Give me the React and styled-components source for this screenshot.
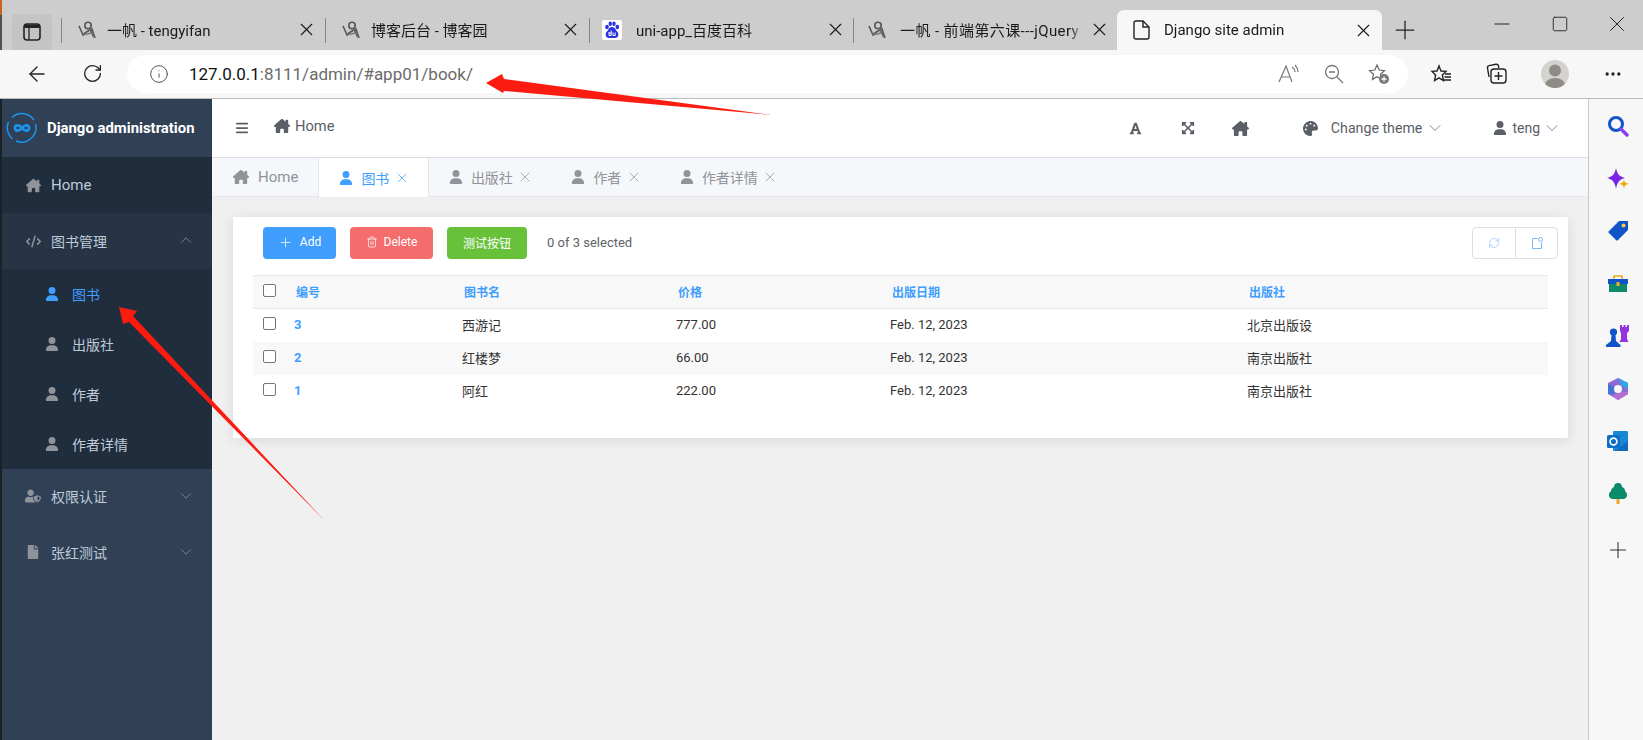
import React from 'react';
import styled, { createGlobalStyle } from 'styled-components';
import { ArrowLeft, RotateCw, Info, X, Plus, Minus, Square, MoreHorizontal, ChevronDown, ChevronUp, Trash2, RefreshCw } from 'lucide-react';
import { FaUserShield, FaFile, FaFont, FaExpandArrowsAlt, FaPalette } from 'react-icons/fa';
import { FaHouseChimney, FaUser, FaCode, FaBars } from 'react-icons/fa6';

const Global = createGlobalStyle`
  html, body { margin: 0; padding: 0; height: 100%; overflow: hidden; }
  body { font-family: Roboto, "Noto Sans CJK SC", sans-serif; font-size: 14px; color: #333; }
  * { box-sizing: border-box; }
`;

const Shell = styled.div`
  position: relative;
  width: 1643px;
  height: 740px;
  display: flex;
  flex-direction: column;
  overflow: hidden;
  background: #f7f7f7;
`;
const Sliver = styled.div`
  position: absolute;
  left: 0;
  top: 0;
  width: 2px;
  height: 50px;
  background: linear-gradient(#c8641e 0 15px, #55504c 15px);
`;

/* browser chrome */
const TabStrip = styled.div`
  height: 50px;
  flex: none;
  display: flex;
  align-items: flex-end;
  padding-left: 12px;
  background: #cdcdcd;
  font-family: Roboto, "Noto Sans CJK SC", sans-serif;
  font-size: 15px;
  color: #1a1a1a;
`;
const PanelBtn = styled.div`
  width: 40px;
  height: 36px;
  margin-right: 9px;
  display: flex;
  align-items: center;
  justify-content: center;
  background: #c4c4c4;
  border-radius: 4px;
`;
const BrowserTab = styled.div`
  width: ${p => (p.$active ? 265 : 264)}px;
  height: ${p => (p.$active ? 40 : 36)}px;
  display: flex;
  align-items: center;
  position: relative;
  padding-left: 16px;
  ${p => p.$active && 'background:#f7f7f7;border-radius:7px 7px 0 0;'}
  ${p => !p.$active && `
    &::before {
      content: '';
      position: absolute;
      left: 0;
      top: 4px;
      height: 25px;
      width: 1px;
      background: #858585;
    }
  `}
`;
const TabIcon = styled.span`
  display: flex;
  margin-left: ${p => p.$shift || 0}px;
  margin-top: ${p => (p.$active ? 0 : -5)}px;
`;
const TabTitle = styled.span`
  margin-left: ${p => p.$gap}px;
  width: 188.5px;
  flex: none;
  white-space: nowrap;
  overflow: hidden;
  letter-spacing: ${p => p.$ls || 0}px;
  margin-top: ${p => (p.$active ? 0 : -5)}px;
  mask-image: linear-gradient(90deg, #000 170px, transparent 184px);
`;
const TabClose = styled(X)`
  flex: none;
  margin-top: ${p => (p.$active ? 0 : -5)}px;
`;
const NewTab = styled.div`
  margin-left: 8px;
  height: 40px;
  display: flex;
  align-items: center;
`;
const WinControls = styled.div`
  margin-left: auto;
  margin-right: -3px;
  align-self: flex-start;
  display: flex;
  height: 50px;
  padding-bottom: 2px;
  align-items: center;
`;
const WinBtn = styled.div`
  width: 57.5px;
  display: flex;
  justify-content: center;
`;
const ToolBar = styled.div`
  height: 49px;
  flex: none;
  display: flex;
  align-items: center;
  padding: 0 20px 1px 25px;
  background: #f7f7f7;
  border-bottom: 1px solid #bdbdbd;
  color: #222;
`;
const NavBtn = styled.div`
  width: 24px;
  display: flex;
  justify-content: center;
  margin-right: ${p => p.$mr || 0}px;
`;
const AddressPill = styled.div`
  width: 1281px;
  height: 38px;
  margin-left: 23px;
  display: flex;
  align-items: center;
  padding-left: 22px;
  border-radius: 19px;
  background: #fff;
  font-family: Roboto, sans-serif;
  font-size: 17px;
  color: #6b6b6b;
`;
const Host = styled.span`
  color: #111;
`;
const Url = styled.div`
  margin-left: 20px;
  white-space: nowrap;
`;
const PillIcons = styled.div`
  margin-left: auto;
  display: flex;
  gap: 24px;
  padding-right: 18px;
  align-items: center;
`;
const ToolIcons = styled.div`
  margin-left: 22px;
  display: flex;
  align-items: center;
  flex: 1;
  justify-content: space-between;
`;
const Avatar = styled.div`
  width: 28px;
  height: 28px;
  border-radius: 50%;
  overflow: hidden;
  background: #d4d2cf;
`;

/* page */
const Body = styled.div`
  flex: 1;
  min-height: 0;
  display: flex;
`;
const Edge = styled.div`
  width: 2px;
  flex: none;
  background: #1a2028;
`;
const Sidebar = styled.nav`
  width: 210px;
  flex: none;
  background: #304156;
  color: #bfcbd9;
`;
const Logo = styled.div`
  height: 58px;
  display: flex;
  align-items: center;
  padding-left: 4px;
  gap: 9px;
  color: #fff;
  font-weight: 700;
  font-size: 14.9px;
  white-space: nowrap;
`;
const MenuRow = styled.div`
  height: 56px;
  display: flex;
  align-items: center;
  padding-left: 22px;
  padding-bottom: ${p => p.$lift || 0}px;
  background: ${p => p.$bg || 'transparent'};
  position: relative;
  font-size: 14px;
  svg { flex: none; }
`;
const MenuLatin = styled.span`
  font-size: 15px;
`;
const MenuIcon = styled.span`
  width: 18px;
  display: flex;
  justify-content: center;
  color: #909399;
  margin-right: 9px;
`;
const Arrow = styled.span`
  position: absolute;
  right: 17px;
  top: 18px;
  color: #909399;
  display: flex;
`;
const SubMenu = styled.div`
  background: #1f2d3d;
`;
const SubRow = styled.div`
  height: 50px;
  display: flex;
  align-items: center;
  padding-left: 43px;
  gap: 13px;
  color: ${p => (p.$active ? '#409eff' : '#bfcbd9')};
  svg { color: ${p => (p.$active ? '#409eff' : '#909399')}; }
`;
const Main = styled.main`
  width: 1377px;
  flex: none;
  display: flex;
  flex-direction: column;
  background: #f0f0f0;
  border-right: 1px solid #c9c9c9;
`;
const Header = styled.header`
  height: 58px;
  flex: none;
  display: flex;
  align-items: center;
  background: #fff;
  color: #5a5e66;
  padding: 0 26px 0 23px;
`;
const Crumb = styled.div`
  margin-left: 25px;
  margin-top: -4px;
  display: flex;
  align-items: center;
  gap: 5px;
  font-size: 14.7px;
`;
const HeaderRight = styled.div`
  margin-left: auto;
  display: flex;
  align-items: center;
`;
const HeadIcon = styled.span`
  display: flex;
  margin-right: ${p => p.$mr}px;
`;
const DropItem = styled.div`
  display: flex;
  align-items: center;
  gap: ${p => p.$gap}px;
  margin-right: ${p => p.$mr || 0}px;
  font-size: ${p => p.$fs || 14}px;
`;
const TabBar = styled.div`
  height: 40px;
  flex: none;
  display: flex;
  background: #f5f7fa;
  border-top: 1px solid #d8dce5;
  border-bottom: 1px solid #e4e7ed;
`;
const PageTab = styled.div`
  display: flex;
  align-items: center;
  height: ${p => (p.$active ? '39px' : 'auto')};
  padding: 0 ${p => p.$pr || 18}px 0 ${p => p.$pl || 20}px;
  gap: 8px;
  color: ${p => (p.$active ? '#409eff' : '#909399')};
  background: ${p => (p.$active ? '#fff' : 'transparent')};
  border-right: ${p => (p.$active || p.$bordered ? '1px solid #e4e7ed' : 'none')};
  border-left: ${p => (p.$active ? '1px solid #e4e7ed' : 'none')};
  margin-left: ${p => (p.$active ? '-1px' : '0')};
`;
const TabLatin = styled.span`
  font-size: 15px;
  margin-left: 1px;
`;
const TabX = styled(X)`
  margin-left: -3.5px;
`;
const Content = styled.div`
  flex: 1;
  padding: 20px 20px 0 21px;
`;
const Card = styled.section`
  height: 221px;
  background: #fff;
  box-shadow: 0 2px 12px rgba(0, 0, 0, 0.1);
  padding: 10px 20px 0;
`;
const Actions = styled.div`
  height: 32px;
  display: flex;
  align-items: center;
  padding-left: 10px;
  margin-bottom: 16px;
`;
const ActionBtn = styled.button`
  height: 32px;
  width: ${p => p.$w}px;
  margin-right: 14px;
  padding: 0 0 2px;
  display: flex;
  align-items: center;
  justify-content: center;
  gap: ${p => p.$gap || 6}px;
  border: none;
  border-radius: 4px;
  background: ${p => p.$bg};
  color: #fff;
  font: 400 12px Roboto, "Noto Sans CJK SC", sans-serif;
`;
const Selected = styled.span`
  margin: -2px 0 0 6px;
  font-size: 13px;
  color: #606266;
`;
const ToolGroup = styled.div`
  margin-left: auto;
  margin-right: -10px;
  display: flex;
  height: 32px;
  border: 1px solid #dcdfe6;
  border-radius: 4px;
  color: #7bb8fb;
`;
const ToolCell = styled.div`
  width: 42px;
  display: flex;
  align-items: center;
  justify-content: center;
  & + & { border-left: 1px solid #dcdfe6; }
`;
const Row = styled.div`
  display: grid;
  grid-template-columns: 41px 168px 214px 214px 357px 1fr;
  align-items: center;
  height: ${p => (p.$head ? 34 : 33)}px;
  padding-bottom: ${p => (p.$head ? 1 : 2)}px;
  font-size: 13px;
  color: #333;
  background: ${p => (p.$alt ? '#f8f8f8' : '#fff')};
  ${p => p.$head && `
    background: #f8f8f8;
    border-top: 1px solid #e8e8e8;
    border-bottom: 1px solid #e8e8e8;
  `}
`;
const HeadCell = styled.span`
  color: #409eff;
  font-weight: 700;
  font-size: 12px;
  padding-left: 2px;
`;
const IdCell = styled.a`
  color: #409eff;
  font-weight: 700;
  font-size: 13px;
`;
const Check = styled.input.attrs({ type: 'checkbox' })`
  width: 13px;
  height: 13px;
  margin: -2px 0 0 10px;
  appearance: none;
  border: 1px solid #767676;
  border-radius: 2px;
  background: #fff;
`;
const SidePanel = styled.aside`
  flex: 1;
  display: flex;
  flex-direction: column;
  padding: 1px 0 0 4px;
  background: #f7f7f7;
`;
const SideItem = styled.div`
  height: 52.5px;
  flex: none;
  display: flex;
  align-items: center;
  justify-content: center;
  margin-top: ${p => p.$mt || 0}px;
`;
const Overlay = styled.svg`
  position: absolute;
  inset: 0;
  pointer-events: none;
`;

const Favicon = () => (
  <svg width="20" height="20" viewBox="0 0 20 20" fill="none" stroke="#555" strokeWidth="1.6">
    <circle cx="11" cy="5.5" r="3.2" />
    <path d="M2 6 L6 15 C9 11 12 11 15 9 L18 18" />
    <path d="M6 15 L14 13" stroke="#777" />
    <path d="M13 8 L17 17" strokeWidth="2.4" stroke="#666" />
  </svg>
);
const BaiduIcon = () => (
  <svg width="20" height="20" viewBox="0 0 20 20">
    <rect width="20" height="20" rx="2" fill="#fff" />
    <g fill="#2932e1">
      <ellipse cx="5" cy="7" rx="1.8" ry="2.2" />
      <ellipse cx="8.3" cy="3.8" rx="1.7" ry="2.2" />
      <ellipse cx="12" cy="3.8" rx="1.7" ry="2.2" />
      <ellipse cx="15.3" cy="7" rx="1.8" ry="2.2" />
      <path d="M10 7 C7 7 6.5 10 4.5 12 C3 14 3.5 18 7 18 H13 C16.5 18 17 14 15.5 12 C13.5 10 13 7 10 7 Z" />
    </g>
    <path d="M7 12 v3.5 h2.2 v-5 M9 13 h-2 M11 12.5 v3 h2.2 v-3" fill="none" stroke="#fff" strokeWidth="1" />
  </svg>
);
const PanelIcon = () => (
  <svg width="18" height="18" viewBox="0 0 18 18" fill="none">
    <rect x="1" y="1" width="16" height="16" rx="3" stroke="#222" strokeWidth="1.6" />
    <path d="M1.5 5 H16.5 V3 Q16.5 1.5 15 1.5 H3 Q1.5 1.5 1.5 3 Z" fill="#222" />
    <path d="M6 5 V17" stroke="#222" strokeWidth="1.3" />
  </svg>
);
const PageIcon = () => (
  <svg width="17" height="20" viewBox="0 0 17 20" fill="none" stroke="#222" strokeWidth="1.4">
    <path d="M3 1 H10 L16 7 V17 Q16 19 14 19 H3 Q1 19 1 17 V3 Q1 1 3 1 Z" />
    <path d="M10 1 V7 H16" />
  </svg>
);
const ReadAloud = () => (
  <svg width="22" height="20" viewBox="0 0 22 20" fill="none" stroke="#777" strokeWidth="1.2">
    <path d="M1 18 L8 2 L14 18 M3.5 13 H12" />
    <path d="M14 3 Q17 5 17 8 M17 1 Q20 4 20 8" />
  </svg>
);
const ZoomOutIcon = () => (
  <svg width="20" height="20" viewBox="0 0 20 20" fill="none" stroke="#777" strokeWidth="1.3">
    <circle cx="8" cy="8" r="6.5" />
    <path d="M5 8 H11 M13 13 L19 19" />
  </svg>
);
const FavAdd = () => (
  <svg width="22" height="22" viewBox="0 0 22 22" fill="none">
    <path d="M9 2 L11.2 7 L16.5 7.6 L12.5 11.2 L13.6 16.5 L9 13.8 L4.4 16.5 L5.5 11.2 L1.5 7.6 L6.8 7 Z" stroke="#666" strokeWidth="1.2" />
    <circle cx="16" cy="16" r="5" fill="#777" />
    <path d="M13.5 16 H18.5 M16 13.5 V18.5" stroke="#fff" strokeWidth="1.3" />
  </svg>
);
const FavList = () => (
  <svg width="22" height="20" viewBox="0 0 22 20" fill="none" stroke="#222" strokeWidth="1.4">
    <path d="M9 2 L11 7 L16 7.4 L12.4 11 L13.4 16.5 L9 13.8 L4.6 16.5 L5.6 11 L2 7.4 L7 7 Z" />
    <path d="M15 10 H21 M14.5 13 H21 M14 16 H21" />
  </svg>
);
const Collections = () => (
  <svg width="21" height="21" viewBox="0 0 21 21" fill="none" stroke="#222" strokeWidth="1.4">
    <path d="M3 14 L1.5 5 Q1.2 3 3 2.6 L10 1.3 Q12 1 12.5 3 L12.7 5" />
    <rect x="5" y="6" width="15" height="14" rx="3" />
    <path d="M12.5 9 V17 M8.5 13 H16.5" />
  </svg>
);
const LogoMark = () => (
  <svg width="32" height="32" viewBox="0 0 32 32" fill="none" stroke="#1c93ec">
    <path d="M6 5.5 A14.5 14.5 0 0 1 28 8 M29.5 12 A14.5 14.5 0 0 1 10 29 M6.5 27 A14.5 14.5 0 0 1 2.5 10" strokeWidth="1.5" />
    <path d="M16 16 C13.5 12.5 9 12.5 9 16 C9 19.5 13.5 19.5 16 16 C18.5 12.5 23 12.5 23 16 C23 19.5 18.5 19.5 16 16 Z" strokeWidth="2.6" />
  </svg>
);
const ExportIcon = () => (
  <svg width="12" height="12" viewBox="0 0 12 12" fill="none" stroke="currentColor" strokeWidth="1">
    <path d="M6.5 1.5 H1.5 V11.5 H10.5 V5.5" />
    <circle cx="9.5" cy="2.5" r="2" />
  </svg>
);
const SearchGem = () => (
  <svg width="22" height="22" viewBox="0 0 22 22" fill="none">
    <circle cx="9" cy="9" r="6.5" stroke="#0f55c9" strokeWidth="3" />
    <path d="M14 14 L20 20" stroke="#8a3ff0" strokeWidth="3.4" strokeLinecap="round" />
  </svg>
);
const Sparkle = () => (
  <svg width="24" height="22" viewBox="0 0 24 22">
    <path d="M10 0 C11 6 14 9 19 10 C14 11 11 14 10 21 C9 14 6 11 1 10 C6 9 9 6 10 0 Z" fill="#7a22e6" />
    <path d="M18 11 C18.4 14 19 15 23 16 C19 16.6 18.4 18 18 21 C17.6 18 17 16.6 13 16 C17 15 17.6 14 18 11 Z" fill="#f2a900" />
  </svg>
);
const TagGem = () => (
  <svg width="22" height="22" viewBox="0 0 22 22">
    <path d="M12 1 H21 V10 L11 20 Q10 21 9 20 L1.5 12.5 Q1 11.5 2 11 Z" fill="#0f55c9" />
    <circle cx="16.5" cy="5.5" r="2" fill="#ffc83d" />
  </svg>
);
const Toolbox = () => (
  <svg width="22" height="20" viewBox="0 0 22 20" fill="none">
    <path d="M7 5 V2 H15 V5" stroke="#e8a820" strokeWidth="1.6" />
    <rect x="1" y="5" width="20" height="5" fill="#0f55c9" />
    <rect x="2" y="10" width="18" height="8" fill="#0d8a6a" />
    <rect x="9.5" y="8" width="3" height="4" fill="#f2b01e" />
  </svg>
);
const Chess = () => (
  <svg width="24" height="24" viewBox="0 0 24 24">
    <path d="M14 1 H16 V3 H17.5 V1 H19.5 V3 H21 V1 H23 V7 L21 9 V15 L22.5 18 H13.5 L15 15 V9 L14 7 Z" fill="#9333dd" />
    <circle cx="7.5" cy="8" r="3.6" fill="#0f55c9" />
    <path d="M5.5 11 H9.5 L10 17 L14.5 21 V23 H0 V21 L5 17 Z" fill="#0f55c9" />
  </svg>
);
const M365 = () => (
  <svg width="22" height="24" viewBox="0 0 22 24">
    <path d="M11 1 L21 6 V17 L11 23 L1 17 V6 Z" fill="#8a6bd6" />
    <path d="M11 1 L21 6 V12 L15 9 Z" fill="#2da7e8" />
    <path d="M1 7 L7 10 V17 L1 17 Z" fill="#3e76d6" />
    <path d="M21 15 L21 17 L11 23 L5 19 L14 15 Z" fill="#b56fd3" />
    <circle cx="11" cy="12" r="4" fill="#f7f7f7" />
  </svg>
);
const Outlook = () => (
  <svg width="22" height="22" viewBox="0 0 22 22">
    <rect x="6" y="1" width="15" height="20" rx="1" fill="#1a86d8" />
    <path d="M8 21 L21 11 V21 Z" fill="#0f6cbd" />
    <rect x="0" y="5" width="13" height="13" rx="1.5" fill="#0a6fc7" />
    <circle cx="6.5" cy="11.5" r="3.4" fill="none" stroke="#fff" strokeWidth="1.7" />
  </svg>
);
const Tree = () => (
  <svg width="20" height="22" viewBox="0 0 20 22">
    <rect x="8.5" y="15" width="3" height="6" fill="#e8a820" />
    <path d="M10 0 C13 0 14 2 14 4 C17 5 17 7 17 8 C20 10 20 16 15 16 H5 C0 16 0 10 3 8 C3 6 4 5 6 4 C6 2 7 0 10 0 Z" fill="#0c8a6c" />
  </svg>
);

const browserTabs = [
  { title: '一帆 - tengyifan', icon: <Favicon />, gap: 10 },
  { title: '博客后台 - 博客园', icon: <Favicon />, gap: 10 },
  { title: 'uni-app_百度百科', icon: <BaiduIcon />, gap: 14, shift: -3 },
  { title: '一帆 - 前端第六课---jQuery', icon: <Favicon />, gap: 13, shift: -2, ls: 0.4 },
];
const subItems = ['图书', '出版社', '作者', '作者详情'];
const columns = ['图书名', '价格', '出版日期', '出版社'];
const books = [
  { id: 3, name: '西游记', price: '777.00', press: '北京出版设' },
  { id: 2, name: '红楼梦', price: '66.00', press: '南京出版社' },
  { id: 1, name: '阿红', price: '222.00', press: '南京出版社' },
];

export default function App() {
  return (
    <Shell>
      <Global />
      <TabStrip>
        <PanelBtn><PanelIcon /></PanelBtn>
        {browserTabs.map(t => (
          <BrowserTab key={t.title}>
            <TabIcon $shift={t.shift}>{t.icon}</TabIcon>
            <TabTitle $gap={t.gap} $ls={t.ls}>{t.title}</TabTitle>
            <TabClose size={21} strokeWidth={1.3} />
          </BrowserTab>
        ))}
        <BrowserTab $active>
          <TabIcon $active><PageIcon /></TabIcon>
          <TabTitle $active $gap={14}>Django site admin</TabTitle>
          <TabClose $active size={21} strokeWidth={1.3} />
        </BrowserTab>
        <NewTab><Plus size={30} strokeWidth={1} color="#222" /></NewTab>
        <WinControls>
          <WinBtn><Minus size={24} strokeWidth={1} color="#222" /></WinBtn>
          <WinBtn><Square size={18} strokeWidth={1.2} color="#222" /></WinBtn>
          <WinBtn><X size={26} strokeWidth={0.9} color="#222" /></WinBtn>
        </WinControls>
      </TabStrip>
      <ToolBar>
        <NavBtn $mr={31}><ArrowLeft size={26} strokeWidth={1.4} /></NavBtn>
        <NavBtn><RotateCw size={21} strokeWidth={1.5} /></NavBtn>
        <AddressPill>
          <Info size={20} strokeWidth={1.2} color="#555" />
          <Url><Host>127.0.0.1</Host>:8111/admin/#app01/book/</Url>
          <PillIcons>
            <ReadAloud />
            <ZoomOutIcon />
            <FavAdd />
          </PillIcons>
        </AddressPill>
        <ToolIcons>
          <FavList />
          <Collections />
          <Avatar>
            <svg width="28" height="28" viewBox="0 0 28 28">
              <circle cx="14" cy="10.5" r="6" fill="#8f8b87" />
              <ellipse cx="14" cy="25" rx="10" ry="7" fill="#8f8b87" />
            </svg>
          </Avatar>
          <MoreHorizontal size={20} strokeWidth={2} />
        </ToolIcons>
      </ToolBar>
      <Body>
        <Edge />
        <Sidebar>
          <Logo><LogoMark />Django administration</Logo>
          <MenuRow $bg="#1f2d3d"><MenuIcon><FaHouseChimney size={15} /></MenuIcon><MenuLatin>Home</MenuLatin></MenuRow>
          <MenuRow $bg="#263445">
            <MenuIcon><FaCode size={15} /></MenuIcon>图书管理
            <Arrow><ChevronUp size={18} strokeWidth={1.1} /></Arrow>
          </MenuRow>
          <SubMenu>
            {subItems.map((s, i) => (
              <SubRow key={s} $active={i === 0}><FaUser size={14} />{s}</SubRow>
            ))}
          </SubMenu>
          <MenuRow $lift={2}>
            <MenuIcon><FaUserShield size={16} /></MenuIcon>权限认证
            <Arrow><ChevronDown size={18} strokeWidth={1.1} /></Arrow>
          </MenuRow>
          <MenuRow $lift={2}>
            <MenuIcon><FaFile size={14} /></MenuIcon>张红测试
            <Arrow><ChevronDown size={18} strokeWidth={1.1} /></Arrow>
          </MenuRow>
        </Sidebar>
        <Main>
          <Header>
            <FaBars size={14} />
            <Crumb><FaHouseChimney size={16} />Home</Crumb>
            <HeaderRight>
              <HeadIcon $mr={39}><FaFont size={13} /></HeadIcon>
              <HeadIcon $mr={37}><FaExpandArrowsAlt size={14} /></HeadIcon>
              <HeadIcon $mr={54}><FaHouseChimney size={17} /></HeadIcon>
              <DropItem $gap={13} $mr={48}>
                <FaPalette size={15} />
                <DropItem $gap={3} $fs={14.2}>Change theme <ChevronDown size={20} strokeWidth={0.9} /></DropItem>
              </DropItem>
              <DropItem $gap={5}>
                <FaUser size={14} />
                <DropItem $gap={2}>teng <ChevronDown size={20} strokeWidth={0.9} /></DropItem>
              </DropItem>
            </HeaderRight>
          </Header>
          <TabBar>
            <PageTab $bordered $pl={21} $pr={20}><FaHouseChimney size={16} /><TabLatin>Home</TabLatin></PageTab>
            <PageTab $active><FaUser size={14} />图书<TabX size={16} strokeWidth={1.1} /></PageTab>
            {subItems.slice(1).map(s => (
              <PageTab key={s}><FaUser size={14} />{s}<TabX size={16} strokeWidth={1.1} /></PageTab>
            ))}
          </TabBar>
          <Content>
            <Card>
              <Actions>
                <ActionBtn $w={73} $bg="#409eff" $gap={7}><Plus size={15} strokeWidth={1.2} />Add</ActionBtn>
                <ActionBtn $w={83} $bg="#f56c6c"><Trash2 size={12} strokeWidth={1.4} />Delete</ActionBtn>
                <ActionBtn $w={80} $bg="#67c23a">测试按钮</ActionBtn>
                <Selected>0 of 3 selected</Selected>
                <ToolGroup>
                  <ToolCell><RefreshCw size={12} strokeWidth={1.2} /></ToolCell>
                  <ToolCell><ExportIcon /></ToolCell>
                </ToolGroup>
              </Actions>
              <Row $head>
                <Check />
                <HeadCell>编号</HeadCell>
                {columns.map(c => <HeadCell key={c}>{c}</HeadCell>)}
              </Row>
              {books.map((b, i) => (
                <Row key={b.id} $alt={i === 1}>
                  <Check />
                  <IdCell>{b.id}</IdCell>
                  <span>{b.name}</span>
                  <span>{b.price}</span>
                  <span>Feb. 12, 2023</span>
                  <span>{b.press}</span>
                </Row>
              ))}
            </Card>
          </Content>
        </Main>
        <SidePanel>
          <SideItem><SearchGem /></SideItem>
          <SideItem><Sparkle /></SideItem>
          <SideItem><TagGem /></SideItem>
          <SideItem><Toolbox /></SideItem>
          <SideItem><Chess /></SideItem>
          <SideItem><M365 /></SideItem>
          <SideItem><Outlook /></SideItem>
          <SideItem><Tree /></SideItem>
          <SideItem $mt={4}><Plus size={26} strokeWidth={1} color="#333" /></SideItem>
        </SidePanel>
      </Body>
      <Sliver />
      <Overlay width="1643" height="740" viewBox="0 0 1643 740">
        <polygon points="486,83 502,74 504,79 771,115 504,91 503,93" fill="#fb1b10" />
        <polygon points="119,307 137,311 133,316 325,521 129,322 123,324" fill="#fb1b10" />
      </Overlay>
    </Shell>
  );
}
